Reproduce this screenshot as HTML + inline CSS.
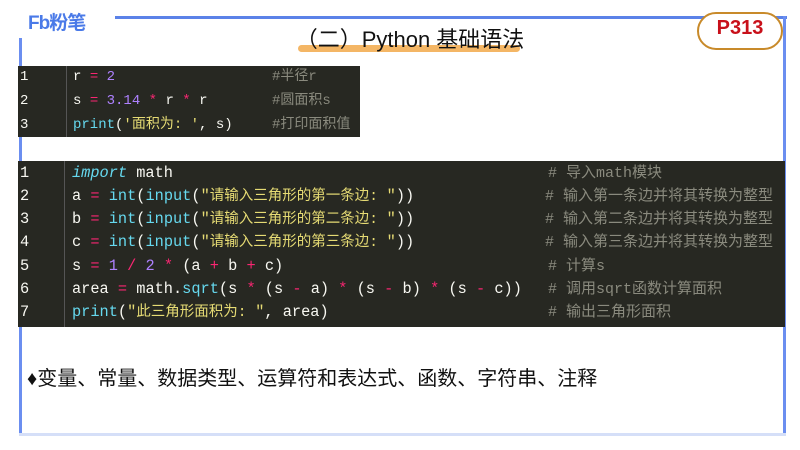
<!DOCTYPE html>
<html><head><meta charset="utf-8"><style>
*{margin:0;padding:0;box-sizing:border-box}
body{width:800px;height:450px;background:#fff;position:relative;overflow:hidden;font-family:"Liberation Sans","Noto Sans CJK SC",sans-serif}
.ab{position:absolute}
.code{position:absolute;background:#272822;font-family:"Liberation Mono","Noto Sans CJK SC",monospace;font-size:14px;color:#f8f8f2}
.row{position:absolute;left:0;right:0;height:23px;line-height:23px;white-space:pre}
.ln{position:absolute;left:2px}
.tx{position:absolute}
.cm{position:absolute;color:#8a8a7e}
.k{color:#f92672}.n{color:#ae81ff}.f{color:#66d9ef}.s{color:#e6db74}
.big{font-size:15.3px}
.big .c{font-size:14.5px}
.big .cm{font-size:15px}
</style></head><body>
<div class="ab" style="left:115px;top:16px;width:672px;height:3px;background:#5b82e8"></div>
<div class="ab" style="left:783px;top:16px;width:3px;height:420px;background:#6b8ef0"></div>
<div class="ab" style="left:19px;top:38px;width:3px;height:398px;background:#6b8ef0"></div>
<div class="ab" style="left:19px;top:433px;width:767px;height:3px;background:#d5dff8"></div>
<div class="ab" style="left:28px;top:8px;font-size:19px;font-weight:bold;color:#4a7ae8;letter-spacing:-1px">Fb粉笔</div>
<div class="ab" style="left:298px;top:45px;width:222px;height:7px;background:#f2a94a;border-radius:4px;opacity:.85"></div>
<div class="ab" style="left:280px;top:22px;width:260px;text-align:center;font-size:22px;color:#111">（二）Python 基础语法</div>
<div class="ab" style="left:697px;top:12px;width:86px;height:38px;border:2px solid #c88a2a;border-radius:20px;background:#fff"></div>
<div class="ab" style="left:697px;top:17px;width:86px;text-align:center;font-size:20px;font-weight:bold;color:#c8101a">P313</div>

<div class="code" style="left:18px;top:66px;width:342px;height:71px">
<div class="ab" style="left:48px;top:0;width:1px;height:71px;background:#555"></div>
<div class="row" style="top:0"><span class="ln">1</span><span class="tx" style="left:55px">r <span class="k">=</span> <span class="n">2</span></span><span class="cm" style="left:254px">#半径r</span></div>
<div class="row" style="top:24px"><span class="ln">2</span><span class="tx" style="left:55px">s <span class="k">=</span> <span class="n">3.14</span> <span class="k">*</span> r <span class="k">*</span> r</span><span class="cm" style="left:254px">#圆面积s</span></div>
<div class="row" style="top:48px"><span class="ln">3</span><span class="tx" style="left:55px"><span class="f">print</span>(<span class="s">'面积为: '</span>, s)</span><span class="cm" style="left:254px">#打印面积值</span></div>
</div>

<div class="code big" style="left:18px;top:161px;width:767px;height:166px">
<div class="ab" style="left:46px;top:0;width:1px;height:166px;background:#555"></div>
<div class="row" style="top:1px"><span class="ln">1</span><span class="tx" style="left:54px"><i class="f">import</i> math</span><span class="cm" style="left:530px"># 导入math模块</span></div>
<div class="row" style="top:24px"><span class="ln">2</span><span class="tx" style="left:54px">a <span class="k">=</span> <span class="f">int</span>(<span class="f">input</span>(<span class="s">"<span class="c">请输入三角形的第一条边: </span>"</span>))</span><span class="cm" style="left:527px"># 输入第一条边并将其转换为整型</span></div>
<div class="row" style="top:47px"><span class="ln">3</span><span class="tx" style="left:54px">b <span class="k">=</span> <span class="f">int</span>(<span class="f">input</span>(<span class="s">"<span class="c">请输入三角形的第二条边: </span>"</span>))</span><span class="cm" style="left:527px"># 输入第二条边并将其转换为整型</span></div>
<div class="row" style="top:70px"><span class="ln">4</span><span class="tx" style="left:54px">c <span class="k">=</span> <span class="f">int</span>(<span class="f">input</span>(<span class="s">"<span class="c">请输入三角形的第三条边: </span>"</span>))</span><span class="cm" style="left:527px"># 输入第三条边并将其转换为整型</span></div>
<div class="row" style="top:94px"><span class="ln">5</span><span class="tx" style="left:54px">s <span class="k">=</span> <span class="n">1</span> <span class="k">/</span> <span class="n">2</span> <span class="k">*</span> (a <span class="k">+</span> b <span class="k">+</span> c)</span><span class="cm" style="left:530px"># 计算s</span></div>
<div class="row" style="top:117px"><span class="ln">6</span><span class="tx" style="left:54px">area <span class="k">=</span> math.<span class="f">sqrt</span>(s <span class="k">*</span> (s <span class="k">-</span> a) <span class="k">*</span> (s <span class="k">-</span> b) <span class="k">*</span> (s <span class="k">-</span> c))</span><span class="cm" style="left:530px"># 调用sqrt函数计算面积</span></div>
<div class="row" style="top:140px"><span class="ln">7</span><span class="tx" style="left:54px"><span class="f">print</span>(<span class="s">"<span class="c">此三角形面积为: </span>"</span>, area)</span><span class="cm" style="left:530px"># 输出三角形面积</span></div>
</div>

<div class="ab" style="left:27px;top:362px;font-size:20px;color:#111">♦变量、常量、数据类型、运算符和表达式、函数、字符串、注释</div>
</body></html>
